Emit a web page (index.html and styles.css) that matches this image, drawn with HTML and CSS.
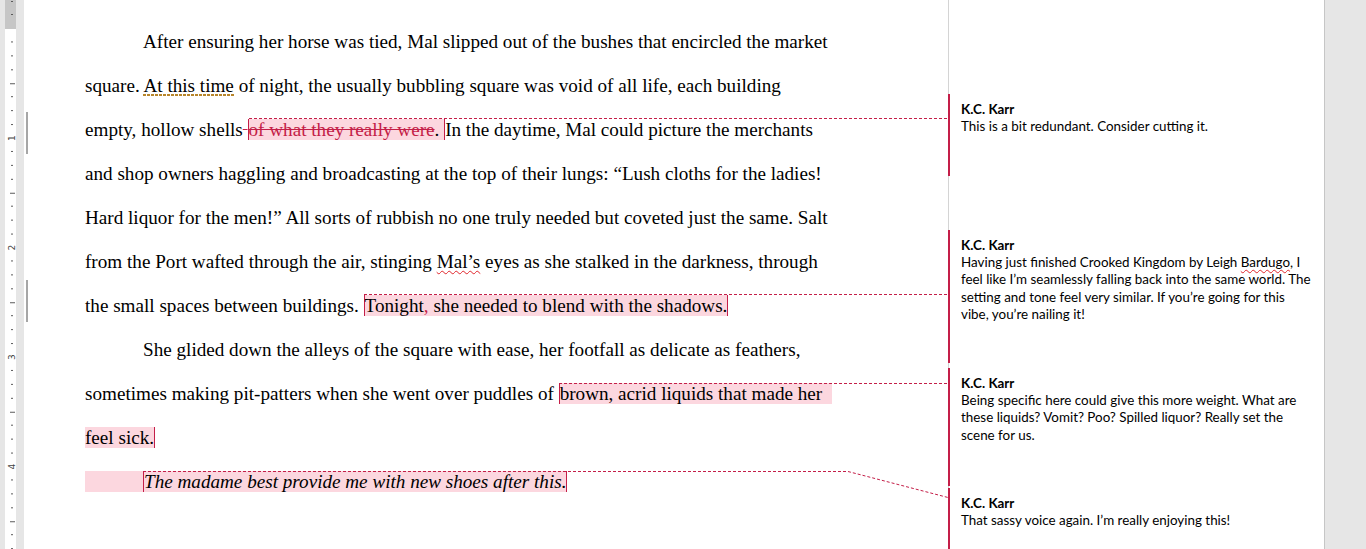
FILE: index.html
```html
<!DOCTYPE html>
<html lang="en">
<head>
    <meta charset="UTF-8">
    <meta name="viewport" content="width=device-width, initial-scale=1.0">
    <title>Chapter One - Review</title>
    <link rel="stylesheet" href="styles.css">
</head>
<body>
    <div class="ruler">
        <svg width="24" height="549" viewBox="0 0 24 549" shape-rendering="crispEdges">
            <defs>
                <pattern id="ticks" patternUnits="userSpaceOnUse" x="0" y="28.5" width="24" height="109.5">
                    <rect x="11" y="13.2" width="2" height="1" fill="#5a5a5a"/>
                    <rect x="11" y="26.9" width="2" height="1" fill="#5a5a5a"/>
                    <rect x="11" y="40.6" width="2" height="1" fill="#5a5a5a"/>
                    <rect x="10" y="54.3" width="5" height="1" fill="#5a5a5a"/>
                    <rect x="11" y="68" width="2" height="1" fill="#5a5a5a"/>
                    <rect x="11" y="81.6" width="2" height="1" fill="#5a5a5a"/>
                    <rect x="11" y="95.3" width="2" height="1" fill="#5a5a5a"/>
                </pattern>
            </defs>
            <rect x="0" y="0" width="24" height="549" fill="#e6e6e6"/>
            <rect x="5" y="0" width="11" height="549" fill="#ffffff"/>
            <rect x="5" y="0" width="11" height="29" fill="#c6c6c6"/>
            <rect x="11" y="1" width="2" height="1" fill="#5a5a5a"/>
            <rect x="11" y="14" width="2" height="1" fill="#5a5a5a"/>
            <rect x="0" y="28.5" width="24" height="521" fill="url(#ticks)"/>
            <g class="ruler-num">
                <text x="12" y="138" transform="rotate(-90 12 138)">1</text>
                <text x="12" y="247.5" transform="rotate(-90 12 247.5)">2</text>
                <text x="12" y="357" transform="rotate(-90 12 357)">3</text>
                <text x="12" y="466.5" transform="rotate(-90 12 466.5)">4</text>
            </g>
        </svg>
    </div>

    <div class="page">
        <div class="doc">
            <span class="change-bar bar-one"></span>
            <span class="change-bar bar-two"></span>

            <p class="para indent">
                After ensuring her horse was tied, Mal slipped out of the bushes that encircled the market<br>
                square. <span class="grammar">At this time</span> of night, the usually bubbling square was void of all life, each building<br>
                empty, hollow shells<del class="deleted"> </del><span class="mark mark-open mark-close"><del class="deleted">of what they really were</del>. </span>In the daytime, Mal could picture the merchants<br>
                and shop owners haggling and broadcasting at the top of their lungs: “Lush cloths for the ladies!<br>
                Hard liquor for the men!” All sorts of rubbish no one truly needed but coveted just the same. Salt<br>
                from the Port wafted through the air, stinging <span class="spelling">Mal’s</span> eyes as she stalked in the darkness, through<br>
                the small spaces between buildings. <span class="mark mark-open mark-close">Tonight<ins class="inserted">,</ins> she needed to blend with the shadows.</span>
            </p>
            <p class="para indent">
                She glided down the alleys of the square with ease, her footfall as delicate as feathers,<br>
                sometimes making pit-patters when she went over puddles of <span class="mark mark-open">brown, acrid liquids that made her&nbsp;&nbsp;</span><br>
                <span class="mark mark-close">feel sick.</span>
            </p>
            <p class="para thought">
                <span class="tab"></span><span class="mark mark-open mark-close">The madame best provide me with new shoes after this.</span>
            </p>
        </div>

        <aside class="comments">
            <div class="comment comment-1">
                <div class="author">K.C. Karr</div>
                <div class="body">This is a bit redundant. Consider cutting it.</div>
            </div>
            <div class="comment comment-2">
                <div class="author">K.C. Karr</div>
                <div class="body">Having just finished Crooked Kingdom by Leigh <span class="spelling">Bardugo</span>, I<br>feel like I’m seamlessly falling back into the same world. The<br>setting and tone feel very similar. If you’re going for this<br>vibe, you’re nailing it!</div>
            </div>
            <div class="comment comment-3">
                <div class="author">K.C. Karr</div>
                <div class="body">Being specific here could give this more weight. What are<br>these liquids? Vomit? Poo? Spilled liquor? Really set the<br>scene for us.</div>
            </div>
            <div class="comment comment-4">
                <div class="author">K.C. Karr</div>
                <div class="body">That sassy voice again. I’m really enjoying this!</div>
            </div>
        </aside>
    </div>

    <!-- dashed leaders from each marked range to its balloon -->
    <svg class="links" width="1366" height="549" viewBox="0 0 1366 549">
        <path d="M249 118.5 H948"/>
        <path d="M364 294.5 H948"/>
        <path d="M559 383.5 H948"/>
        <path d="M143 471.5 H848 L948 497.5"/>
    </svg>
</body>
</html>
```

FILE: styles.css
```css
* {
    margin: 0;
    padding: 0;
    box-sizing: border-box;
}

html,
body {
    height: 100%;
    overflow: hidden;
}

body {
    position: relative;
    display: flex;
    background: #e6e6e6;
    color: #000;
    font-family: 'Liberation Serif', 'Times New Roman', serif;
}

.ruler {
    flex: none;
    width: 24px;
    height: 549px;
}

.ruler svg {
    display: block;
}

.ruler-num text {
    font-family: 'DejaVu Sans', sans-serif;
    font-size: 9px;
    fill: #444;
    text-anchor: middle;
    dominant-baseline: central;
}

.page {
    flex: none;
    display: flex;
    width: 1301px;
    height: 549px;
    background: #fff;
}

/* document body */
.doc {
    position: relative;
    flex: none;
    width: 924px;
    padding: 20px 0 0 61px;
    font-size: 19.15px;
    line-height: 44px;
    white-space: nowrap;
}

.para.indent {
    text-indent: 58px;
}

.thought .mark {
    font-style: italic;
}

.change-bar {
    position: absolute;
    left: 2px;
    width: 2px;
    height: 42px;
    background: #a6a6a6;
}

.bar-one {
    top: 112px;
}

.bar-two {
    top: 280px;
}

.mark {
    background: #fcd7df;
}

.mark-open {
    border-left: 1px solid #c41e48;
}

.mark-close {
    border-right: 1px solid #c41e48;
}

.tab {
    display: inline-block;
    width: 58px;
    height: 21px;
    vertical-align: -4px;
    background: #fcd7df;
}

.deleted {
    color: #c41e48;
    text-decoration: line-through;
    text-decoration-color: #c41e48;
}

.inserted {
    color: #c41e48;
    text-decoration: underline;
}

.grammar {
    background: repeating-linear-gradient(to right, #b8862b 0 3px, transparent 3px 4px) left bottom / 100% 2px no-repeat;
}

.spelling {
    text-decoration: underline wavy #e0252b;
    text-decoration-thickness: 1px;
    text-underline-offset: 2px;
}

/* comment balloons */
.comments {
    flex: none;
    display: flex;
    flex-direction: column;
    width: 377px;
    border-left: 1px solid #d4d4d4;
    border-right: 1px solid #c6c6c6;
    font-family: 'Lato', 'Open Sans', sans-serif;
    font-size: 13.4px;
    color: #000;
    white-space: nowrap;
}

.comment {
    margin-left: -1px;
    padding: 6px 0 0 11px;
    border-left: 2px solid #c41e48;
    background: #fff;
}

.comment .author {
    font-weight: bold;
    line-height: 18px;
}

.comment .body {
    line-height: 17.3px;
}

.comment-1 {
    margin-top: 94px;
    height: 82px;
}

.comment-2 {
    margin-top: 54px;
    height: 133px;
}

.comment-3 {
    margin-top: 5px;
    height: 118px;
}

.comment-4 {
    margin-top: 2px;
    flex: 1;
}

.links {
    position: absolute;
    left: 0;
    top: 0;
    pointer-events: none;
}

.links path {
    fill: none;
    stroke: #c41e48;
    stroke-width: 1;
    stroke-dasharray: 3 2;
}
```
